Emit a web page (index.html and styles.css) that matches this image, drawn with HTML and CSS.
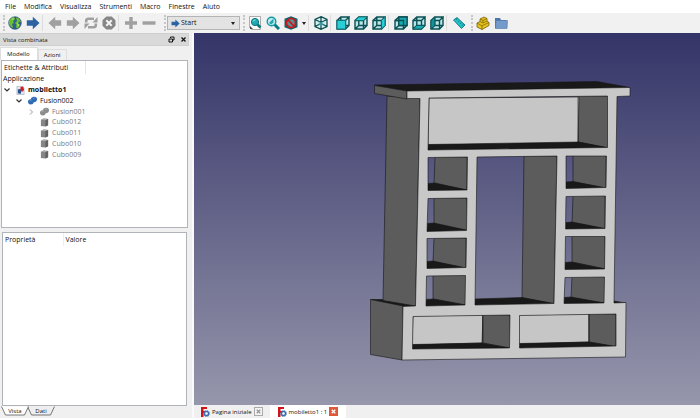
FILE: index.html
```html
<!DOCTYPE html>
<html lang="it">
<head>
    <meta charset="UTF-8">
    <meta name="viewport" content="width=device-width, initial-scale=1.0">
    <title>mobiletto1</title>
    <link rel="stylesheet" href="styles.css">
</head>
<body>
    <svg class="defs" aria-hidden="true">
        <defs>
            <symbol id="arrow" viewBox="0 0 14 14"><path d="M.8 4.300h6V.8L13.500 7l-6.700 6.200V9.700h-6z"/></symbol>
            <symbol id="cube" viewBox="0 0 14 14">
                <path d="M.8 4.300l4-3.500h8.400v8.700l-3.700 3.700H.8z" fill="#b9e6e8"/>
                <path d="M1 4.500h8.500V13H1zM1 4.500L4.800 1H13L9.500 4.500M13 1v8.500L9.500 13M4.800 1v8.500H13M4.800 9.500L1 13" fill="none" stroke="#0c5054" stroke-width="1.400"/>
            </symbol>
            <symbol id="box" viewBox="0 0 10 10">
                <path d="M1 2l3-1.500L9 1v7L6 9.500 1 9z" fill="#858585"/>
                <path d="M1 2l3-1.500L9 1 6 2.500z" fill="#aaa"/>
                <path d="M6 2.500L9 1v7L6 9.500z" fill="#626262"/>
            </symbol>
            <symbol id="fusion" viewBox="0 0 12 10">
                <path d="M1 7a3 3 0 0 1 3-3.500A3.500 3.500 0 0 1 8 .8 3 3 0 0 1 11 4a3.500 3.500 0 0 1-3.500 3A3.500 3.500 0 0 1 4 9.500 3 3 0 0 1 1 7z"/>
                <path d="M3 5.500l2-1M6.500 3l2-1" stroke="#fff" stroke-opacity=".3" fill="none"/>
            </symbol>
            <symbol id="down" viewBox="0 0 8 8"><path d="M1.500 2.500L4 5l2.500-2.500" fill="none" stroke="#333" stroke-width="1.200"/></symbol>
            <symbol id="logo" viewBox="0 0 10 10">
                <path d="M1 0h6v2H3.500v2h3v2h-3v4H1z" fill="#d11218"/>
                <circle cx="6.500" cy="6.500" r="2.100" fill="#fff" stroke="#3c6eb0" stroke-width="1.500"/>
                <circle cx="6.500" cy="6.500" r="3.100" fill="none" stroke="#3c6eb0" stroke-width=".8" stroke-dasharray="1.200 1.200"/>
            </symbol>
        </defs>
    </svg>

    <nav class="menubar">
        <a href="#">File</a>
        <a href="#">Modifica</a>
        <a href="#">Visualizza</a>
        <a href="#">Strumenti</a>
        <a href="#">Macro</a>
        <a href="#">Finestre</a>
        <a href="#">Aiuto</a>
    </nav>

    <div class="toolbar">
        <span class="grip"></span>
        <button class="tool" aria-label="Web"><svg viewBox="0 0 14 14"><circle cx="7" cy="7" r="6.300" fill="#315f94" stroke="#24466f" stroke-width=".6"/><path d="M1 5l2-3 3-1 1 2-2 2 1 2-2 1 1 3-1 1-3-4zM8 1.500l3 1 2 4-2-1-1 2 2 1-2 4-2-1 .5-3L7 7l2-2z" fill="#68c22b"/><path d="M4 2.500l2 0-1 2zM9 6l2 3-1 2z" fill="#c3e86c"/></svg></button>
        <button class="tool blue" aria-label="Start"><svg><use href="#arrow"/></svg></button>
        <span class="sep"></span>
        <button class="tool gray back" aria-label="Indietro"><svg><use href="#arrow"/></svg></button>
        <button class="tool gray" aria-label="Avanti"><svg><use href="#arrow"/></svg></button>
        <button class="tool gray" aria-label="Aggiorna"><svg viewBox="0 0 14 14"><path d="M2.200 6.500V5q0-2.200 2.200-2.200H10M11.800 7.500V9q0 2.200-2.200 2.200H4" fill="none" stroke="#a0a0a0" stroke-width="2.600"/><path d="M8.500 6.500h5V1zM5.500 7.500h-5V13z"/></svg></button>
        <button class="tool" aria-label="Ferma"><svg viewBox="0 0 14 14"><path d="M4.300.5h5.400l3.800 3.800v5.400l-3.800 3.800H4.300L.5 9.700V4.300z" fill="#868686"/><path d="M4.300 4.300l5.400 5.400M9.700 4.300L4.300 9.700" stroke="#f4f4f4" stroke-width="2"/></svg></button>
        <span class="sep"></span>
        <button class="tool gray" aria-label="Ingrandisci"><svg viewBox="0 0 14 14"><path d="M5.300 1h3.400v4.300H13v3.400H8.700V13H5.300V8.700H1V5.300h4.300z"/></svg></button>
        <button class="tool gray" aria-label="Riduci"><svg viewBox="0 0 14 14"><path d="M.5 5.300h13v3.400H.5z"/></svg></button>
        <span class="grip wide"></span>
        <div class="combo">
            <svg class="combo-icon"><use href="#arrow"/></svg>
            <select aria-label="Ambiente">
                <option>Start</option>
            </select>
        </div>
        <span class="grip"></span>
        <button class="tool" aria-label="Adatta alla vista"><svg viewBox="0 0 14 14"><path d="M1.500.5h11v13h-9l-2-2z" fill="#fafafa" stroke="#999" stroke-width=".8"/><path d="M2 10v3h3" fill="#444"/><path d="M9 8l3.500 3.500" stroke="#08777e" stroke-width="2.600"/><circle cx="7" cy="6" r="3.600" fill="#22aab4" stroke="#09757d"/><path d="M5 5.500q1-2 2.500-1.500" stroke="#9ceaea" fill="none"/></svg></button>
        <button class="tool" aria-label="Adatta selezione"><svg viewBox="0 0 14 14"><path d="M8 8l5 5" stroke="#087b82" stroke-width="3"/><circle cx="5.500" cy="5.500" r="4.300" fill="#bcecee" stroke="#159aa3" stroke-width="1.400"/><path d="M3 7l4.500-4.500v4L5 8.500z" fill="#26a6b0"/></svg></button>
        <button class="tool" aria-label="Stile di disegno"><svg viewBox="0 0 14 14"><path d="M7 .3l6.500 2.500v8.500L7 13.700.5 11.300V2.800z" fill="#17606a"/><circle cx="7" cy="7" r="4.500" fill="#5e8d90" stroke="#cf141b" stroke-width="1.700"/><path d="M4 4l6 6" stroke="#cf141b" stroke-width="1.700"/></svg></button>
        <button class="tool-arrow" aria-label="Altri stili"></button>
        <span class="sep"></span>
        <button class="tool" aria-label="Assonometrica"><svg viewBox="0 0 14 14"><path d="M7 .7l6 2.800v7L7 13.300 1 10.500v-7zM1 3.500L7 6.300l6-2.800M7 .7v12.600M1 10.500l6-3 6 3" fill="#d5eeee" stroke="#0c5054" stroke-width="1.300"/><path d="M4.500 5L7 6.300 9.500 5v4L7 10 4.500 9z" fill="#51bcc1" fill-opacity=".5"/></svg></button>
        <span class="sep"></span>
        <button class="tool" aria-label="Davanti"><svg viewBox="0 0 14 14"><use href="#cube"/><path d="M1 4.500h8.500V13H1z" fill="#28cfd6" stroke="#0c777c"/></svg></button>
        <button class="tool" aria-label="Alto"><svg viewBox="0 0 14 14"><use href="#cube"/><path d="M1 4.500L4.800 1H13L9.500 4.500z" fill="#28cfd6" stroke="#0c666a" stroke-width=".8"/></svg></button>
        <button class="tool" aria-label="Destra"><svg viewBox="0 0 14 14"><use href="#cube"/><path d="M9.500 4.500L13 1v8.500L9.500 13z" fill="#28cfd6" stroke="#0c666a" stroke-width=".8"/></svg></button>
        <span class="sep"></span>
        <button class="tool" aria-label="Dietro"><svg viewBox="0 0 14 14"><use href="#cube"/><path d="M4.800 1H13v8.500H4.800z" fill="#18a9b1"/><path d="M1 4.500h8.500V13M4.800 1H13v8.500H4.800z" fill="none" stroke="#0c5054" stroke-width="1.300"/></svg></button>
        <button class="tool" aria-label="Basso"><svg viewBox="0 0 14 14"><use href="#cube"/><path d="M1 13l3.800-3.500H13L9.500 13z" fill="#18aeb6" stroke="#0c5054" stroke-width=".8"/></svg></button>
        <button class="tool" aria-label="Sinistra"><svg viewBox="0 0 14 14"><use href="#cube"/><path d="M1 4.500L4.800 1v8.500L1 13z" fill="#149098" stroke="#0c5054" stroke-width=".8"/></svg></button>
        <span class="sep"></span>
        <button class="tool" aria-label="Misura"><svg viewBox="0 0 14 14"><path d="M1.500 4l3.500-2.500 8 7.500-3.500 3.500z" fill="#25bfc8" stroke="#0a7b82" stroke-width=".9"/><path d="M5.500 2.500L4 4M7.500 4.500L6 6M9.500 6.500L8 8M11.500 8L10 9.800" stroke="#075c62" stroke-width=".6"/></svg></button>
        <span class="grip"></span>
        <button class="tool" aria-label="Crea parte"><svg viewBox="0 0 14 14"><path d="M1 7l3-1.500V3l4-2 3 1.500V5l2 1.500v3L6 13.500 1 11z" fill="#e6c21d" stroke="#74600c" stroke-width=".8"/><path d="M4 5.500l3 1.500 4-2M1 7l5 2.800 7-3.300M6 10v3.500M4 3l3 1.400L11 2.500M7 4.500V7" stroke="#806909" stroke-width=".8" fill="none"/></svg></button>
        <button class="tool" aria-label="Crea gruppo"><svg viewBox="0 0 14 14"><path d="M1 2h5l1 2h5v8H1z" fill="#4d75a7"/><path d="M2 4.500h11.500l-.5 8H1.500z" fill="#729bcb" stroke="#5277a3" stroke-width=".6"/></svg></button>
    </div>

    <div class="workspace">
        <aside class="dock">
            <header class="dock-title">
                <span>Vista combinata</span>
                <button aria-label="Sgancia"><svg viewBox="0 0 7 7"><path d="M2.500 2V1H6v3H5M1 3h3.500v3H1z" fill="none" stroke="#111"/></svg></button>
                <button aria-label="Chiudi"><svg viewBox="0 0 7 7"><path d="M1.500 1.500l4 4M5.500 1.500l-4 4" stroke="#111" stroke-width="1.200"/></svg></button>
            </header>
            <div class="dock-tabs">
                <button class="dock-tab active">Modello</button>
                <button class="dock-tab">Azioni</button>
            </div>
            <section class="tree-panel">
                <div class="tree-head">Etichette &amp; Attributi</div>
                <ul class="tree">
                    <li>Applicazione</li>
                    <li class="level-1"><svg class="toggle"><use href="#down"/></svg><svg class="node-icon" viewBox="0 0 10 10"><path d="M1 .5h6l2 2v7H1z" fill="#e4eaf2" stroke="#8c9db3" stroke-width=".6"/><path d="M2 4l3-1 1 3-1 3-3-1z" fill="#27528f"/><path d="M5 1l3-.5 1 4-2 2-2-2z" fill="#cf1e24"/></svg><b>mobiletto1</b></li>
                    <li class="level-2"><svg class="toggle"><use href="#down"/></svg><svg class="node-icon fusion-blue"><use href="#fusion"/></svg>Fusion002</li>
                    <li class="level-3 muted"><svg class="toggle" viewBox="0 0 8 8"><path d="M3 1.500L5.500 4 3 6.500" fill="none" stroke="#999"/></svg><svg class="node-icon fusion-gray"><use href="#fusion"/></svg>Fusion001</li>
                    <li class="level-3 muted"><span class="toggle"></span><svg class="node-icon"><use href="#box"/></svg>Cubo012</li>
                    <li class="level-3 muted"><span class="toggle"></span><svg class="node-icon"><use href="#box"/></svg>Cubo011</li>
                    <li class="level-3 muted"><span class="toggle"></span><svg class="node-icon"><use href="#box"/></svg>Cubo010</li>
                    <li class="level-3 muted"><span class="toggle"></span><svg class="node-icon"><use href="#box"/></svg>Cubo009</li>
                </ul>
            </section>
            <section class="props-panel">
                <table class="props">
                    <thead>
                        <tr><th>Proprietà</th><th>Valore</th></tr>
                    </thead>
                </table>
            </section>
            <div class="bottom-tabs">
                <button class="slant front"><svg viewBox="0 0 28 10"><path d="M.5 0l4 8.500h19L27.500 0" fill="#fff" stroke="#555" stroke-width=".8"/></svg><span>Vista</span></button>
                <button class="slant"><svg viewBox="0 0 28 10"><path d="M.5 0l4 8.500h19L27.500 0" fill="#eee" stroke="#555" stroke-width=".8"/></svg><span>Dati</span></button>
            </div>
        </aside>

        <main class="view">
            <div class="canvas">
                <svg class="model" viewBox="194 33 506 372">
                    <!-- inside faces -->
                    <g class="side">
                        <path d="M578 96h30v52l-30-6z"/>
                        <path d="M435 157h32v33l-33-6z"/>
                        <path d="M434 198h33v33l-33-7z"/>
                        <path d="M434 238h32v30l-33-6z"/>
                        <path d="M433 275h33v30l-33-6z"/>
                        <path d="M524 156h33l-3 148-32-6z"/>
                        <path d="M573 155h33v33l-33-6z"/>
                        <path d="M573 195h32v34l-33-6z"/>
                        <path d="M572 236h33v33l-33-7z"/>
                        <path d="M572 276h33v27l-34-5z"/>
                    </g>
                    <g class="face">
                        <path d="M429 98l150-1-1 46-150 2z"/>
                        <path d="M413 316l70-1-1 28-70 2z"/>
                        <path d="M519 315l70-1v28l-70 2z"/>
                    </g>
                    <path class="side" d="M483 315h27v33l-27-5zM589 314h27v33l-27-5z"/>
                    <g class="top">
                        <path d="M428 144.500l150-2.500 29 5.500-179 2.500z"/>
                        <path d="M428 183.500l7-.5 32 7-39 1z"/>
                        <path d="M427 223.500l7-.5 32 7-39 1.500z"/>
                        <path d="M427 261.500l6-.5 33 7-39 1z"/>
                        <path d="M426 299.500l7-.5 32 6-39 1z"/>
                        <path d="M475 299l47-1.500 32 6-79 1.500z"/>
                        <path d="M566 182l7-.5 33 6.500-40 1z"/>
                        <path d="M566 222.500l6-.5 33 6.500-39 1z"/>
                        <path d="M565 262.500l6-.5 34 7-40 1z"/>
                        <path d="M564 297.500l7-.5 33 6-40 1z"/>
                        <path d="M412 344.500l70-1.500 27 5-97 1z"/>
                        <path d="M519 343.500l70-1.500 27 4.500-97 1.500z"/>
                        <path d="M374.500 85l222.500-3.500 33 6L407 91z"/>
                        <path d="M370.500 299.500h12.500l33 6-13 1zM614 301l12 2h-12z"/>
                    </g>
                    <!-- outer sides -->
                    <g class="side">
                        <path d="M387 96l33 2-4.500 208-32.500-5.500z"/>
                        <path d="M374.500 85.500L407 91v8l-32.500-5.500z"/>
                        <path d="M370.500 299.500l32.500 6.500-1 54-31.500-5.500z"/>
                    </g>
                    <!-- front frame with its openings -->
                    <path class="frame" fill-rule="evenodd" d="M407 91l223-3.500V96l-13 .5L614 303l12-.5-.5 54.500L402 360l1-53.500 12.500-.5L420 98.500H407z
                        M429 98l178.500-2v51.500L428 150z
                        M428 157.500l39.500-.5-.5 33-39 .5z M428 198.500l39-.5-.5 32.500-39.500 1z M427 238.500l39.500-.5-.5 29.500-39 1z M426.500 276l39-.5-.5 29.500-39 1z
                        M477 157l80-1-3 147.500-79 1.500z
                        M566 156h40.500l-.5 31.500-40 1z M566 196.500l39.500-.5-.5 32.500-39.500.5z M565.500 236.500h39.500l-.5 32.500-39.500.5z M565 277.500l39.500-.5-.5 26-40 .5z
                        M413 316.500l97-1.500-.5 33-97 1z M519.500 315.500l96.500-1.500v32l-96.500 2z"/>
                    <path class="edge" d="M578 97v45M482.500 315v28M589 314v28"/>
                </svg>
            </div>
            <div class="doc-tabs">
                <div class="doc-tab"><svg class="logo"><use href="#logo"/></svg><span>Pagina iniziale</span><button class="close" aria-label="Chiudi Pagina iniziale"><svg viewBox="0 0 8 8"><path d="M2 2l4 4M6 2L2 6"/></svg></button></div>
                <div class="doc-tab current"><svg class="logo"><use href="#logo"/></svg><span>mobiletto1 : 1</span><button class="close" aria-label="Chiudi mobiletto1"><svg viewBox="0 0 8 8"><path d="M2 2l4 4M6 2L2 6"/></svg></button></div>
            </div>
        </main>
    </div>
</body>
</html>
```
FILE: styles.css
```css
* {
    box-sizing: border-box;
}

body {
    margin: 0;
    height: 100vh;
    display: flex;
    flex-direction: column;
    font-family: "Open Sans", "Noto Sans", sans-serif;
    font-size: 7px;
    line-height: 10px;
    color: #111;
    background: #f0f0f0;
    overflow: hidden;
}

button {
    margin: 0;
    padding: 0;
    border: none;
    background: none;
    font: inherit;
    color: inherit;
}

svg {
    display: block;
    flex: none;
}

.defs {
    position: absolute;
    width: 0;
    height: 0;
}

/* menu */
.menubar {
    display: flex;
    gap: 8px;
    height: 13px;
    padding: 2px 5px 0;
    background: #fff;
}

.menubar a {
    color: #111;
    text-decoration: none;
}

/* toolbar */
.toolbar {
    display: flex;
    align-items: center;
    height: 20px;
    padding-left: 2px;
    background: #f1f1f1;
}

.tool {
    display: flex;
    justify-content: center;
    width: 18px;
}

.tool svg {
    width: 14px;
    height: 14px;
}

.blue {
    fill: #2d62a3;
}

.gray {
    fill: #a0a0a0;
}

.back svg {
    transform: scaleX(-1);
}

.sep {
    width: 4px;
    height: 16px;
    border-left: 1px solid #dcdcdc;
}

.grip {
    width: 2px;
    height: 16px;
    margin: 0 1px 0 3px;
    border-left: 2px dotted #c6c6c6;
}

.toolbar .grip:first-child {
    margin-left: 1px;
}

.grip.wide {
    margin-left: 6px;
}

.tool-arrow {
    width: 8px;
    height: 14px;
    display: flex;
    align-items: center;
    justify-content: center;
}

.tool-arrow::after {
    content: "";
    border: 2px solid transparent;
    border-top: 3px solid #222;
    border-bottom: none;
}

.combo {
    display: flex;
    align-items: center;
    width: 73px;
    height: 14px;
    padding: 0 4px 0 3px;
    background: #e3e3e3;
    border: 1px solid #b4b4b4;
}

.combo::after {
    content: "";
    border: 2px solid transparent;
    border-top: 3px solid #222;
    border-bottom: none;
}

.combo-icon {
    width: 9px;
    height: 9px;
    fill: #2d62a3;
}

.combo select {
    flex: 1;
    min-width: 0;
    padding: 0 0 0 1px;
    border: none;
    appearance: none;
    background: none;
    font: inherit;
    color: inherit;
}

/* left dock */
.workspace {
    flex: 1;
    display: flex;
    min-height: 0;
}

.dock {
    width: 194px;
    flex: none;
    display: flex;
    flex-direction: column;
    padding-right: 3px;
    border-right: 2px solid #fafafa;
}

.dock-title {
    display: flex;
    align-items: center;
    gap: 5px;
    height: 13px;
    padding: 0 1px 0 3px;
    background: #d9d9d9;
    border: 1px solid #cfcfcf;
    border-left: none;
    font-size: 6px;
}

.dock-title span {
    flex: 1;
}

.dock-title svg {
    width: 7px;
    height: 7px;
}

.dock-tabs {
    display: flex;
    align-items: flex-end;
    height: 14px;
    font-size: 6px;
}

.dock-tab {
    height: 11px;
    padding: 0 5px;
    border: 1px solid #dedede;
    border-bottom: none;
}

.dock-tab.active {
    height: 13px;
    padding: 0 7px 0 6px;
    background: #fff;
}

.tree-panel {
    height: 168px;
    margin: 0 1px;
    background: #fff;
    border: 1px solid #b0b4b8;
}

.tree-head {
    width: 84px;
    height: 13px;
    padding: 2px 0 0 2px;
    border-right: 1px solid #e4e4e4;
}

.tree {
    display: grid;
    grid-auto-rows: 1fr;
    height: 86px;
    margin: 0;
    padding: 0 0 0 1px;
    list-style: none;
}

.tree li {
    display: flex;
    align-items: center;
}

.toggle {
    width: 8px;
    height: 8px;
}

.node-icon {
    width: 11px;
    height: 9px;
    margin: 0 2px 0 4px;
}

.level-2 {
    margin-left: 12px;
}

.level-3 {
    margin-left: 24px;
}

.muted {
    color: #7c7c7c;
}

.fusion-blue {
    fill: #2f6bb5;
}

.fusion-gray {
    fill: #8c8c8c;
}

.props-panel {
    flex: 1;
    margin: 4px 2px 0;
    background: #fff;
    border: 1px solid #b0b4b8;
}

.props {
    width: 100%;
    border-collapse: collapse;
}

.props th {
    height: 13px;
    padding: 1px 2px 0;
    font-weight: normal;
    text-align: left;
}

.props th:first-child {
    width: 60px;
    border-right: 1px solid #eee;
}

.bottom-tabs {
    display: flex;
    height: 12px;
    padding-left: 1px;
}

.slant {
    position: relative;
    width: 28px;
    height: 11px;
    margin-right: -2px;
}

.slant svg {
    width: 28px;
    height: 11px;
}

.slant span {
    position: absolute;
    inset: 0;
    font-size: 6px;
}

.front {
    z-index: 1;
}

/* 3D view */
.view {
    flex: 1;
    display: flex;
    flex-direction: column;
    min-width: 0;
}

.canvas {
    flex: 1;
    min-height: 0;
    background: linear-gradient(#343468, #9696ac);
}

.model {
    width: 100%;
    height: 100%;
    stroke: #161616;
    stroke-width: .6;
}

.side {
    fill: #5c5c5c;
}

.face {
    fill: #c6c6c6;
}

.top {
    fill: #191919;
}

.frame {
    fill: #c8c8c8;
}

.edge {
    fill: none;
}

.doc-tabs {
    display: flex;
    height: 13px;
}

.doc-tab {
    display: flex;
    align-items: center;
    gap: 2px;
    padding: 0 7px 0 6px;
    font-size: 6px;
}

.doc-tab.current {
    padding: 0 8px 0 7px;
    background: #fff;
}

.logo {
    width: 10px;
    height: 10px;
}

.close {
    background: #f4f4f4;
    border: 1px solid #aaa;
}

.close svg {
    width: 7px;
    height: 7px;
    stroke: #999;
    stroke-width: 1.5;
}

.current .close {
    background: #e0583a;
    border-color: #e0583a;
}

.current .close svg {
    stroke: #fff;
}
```
